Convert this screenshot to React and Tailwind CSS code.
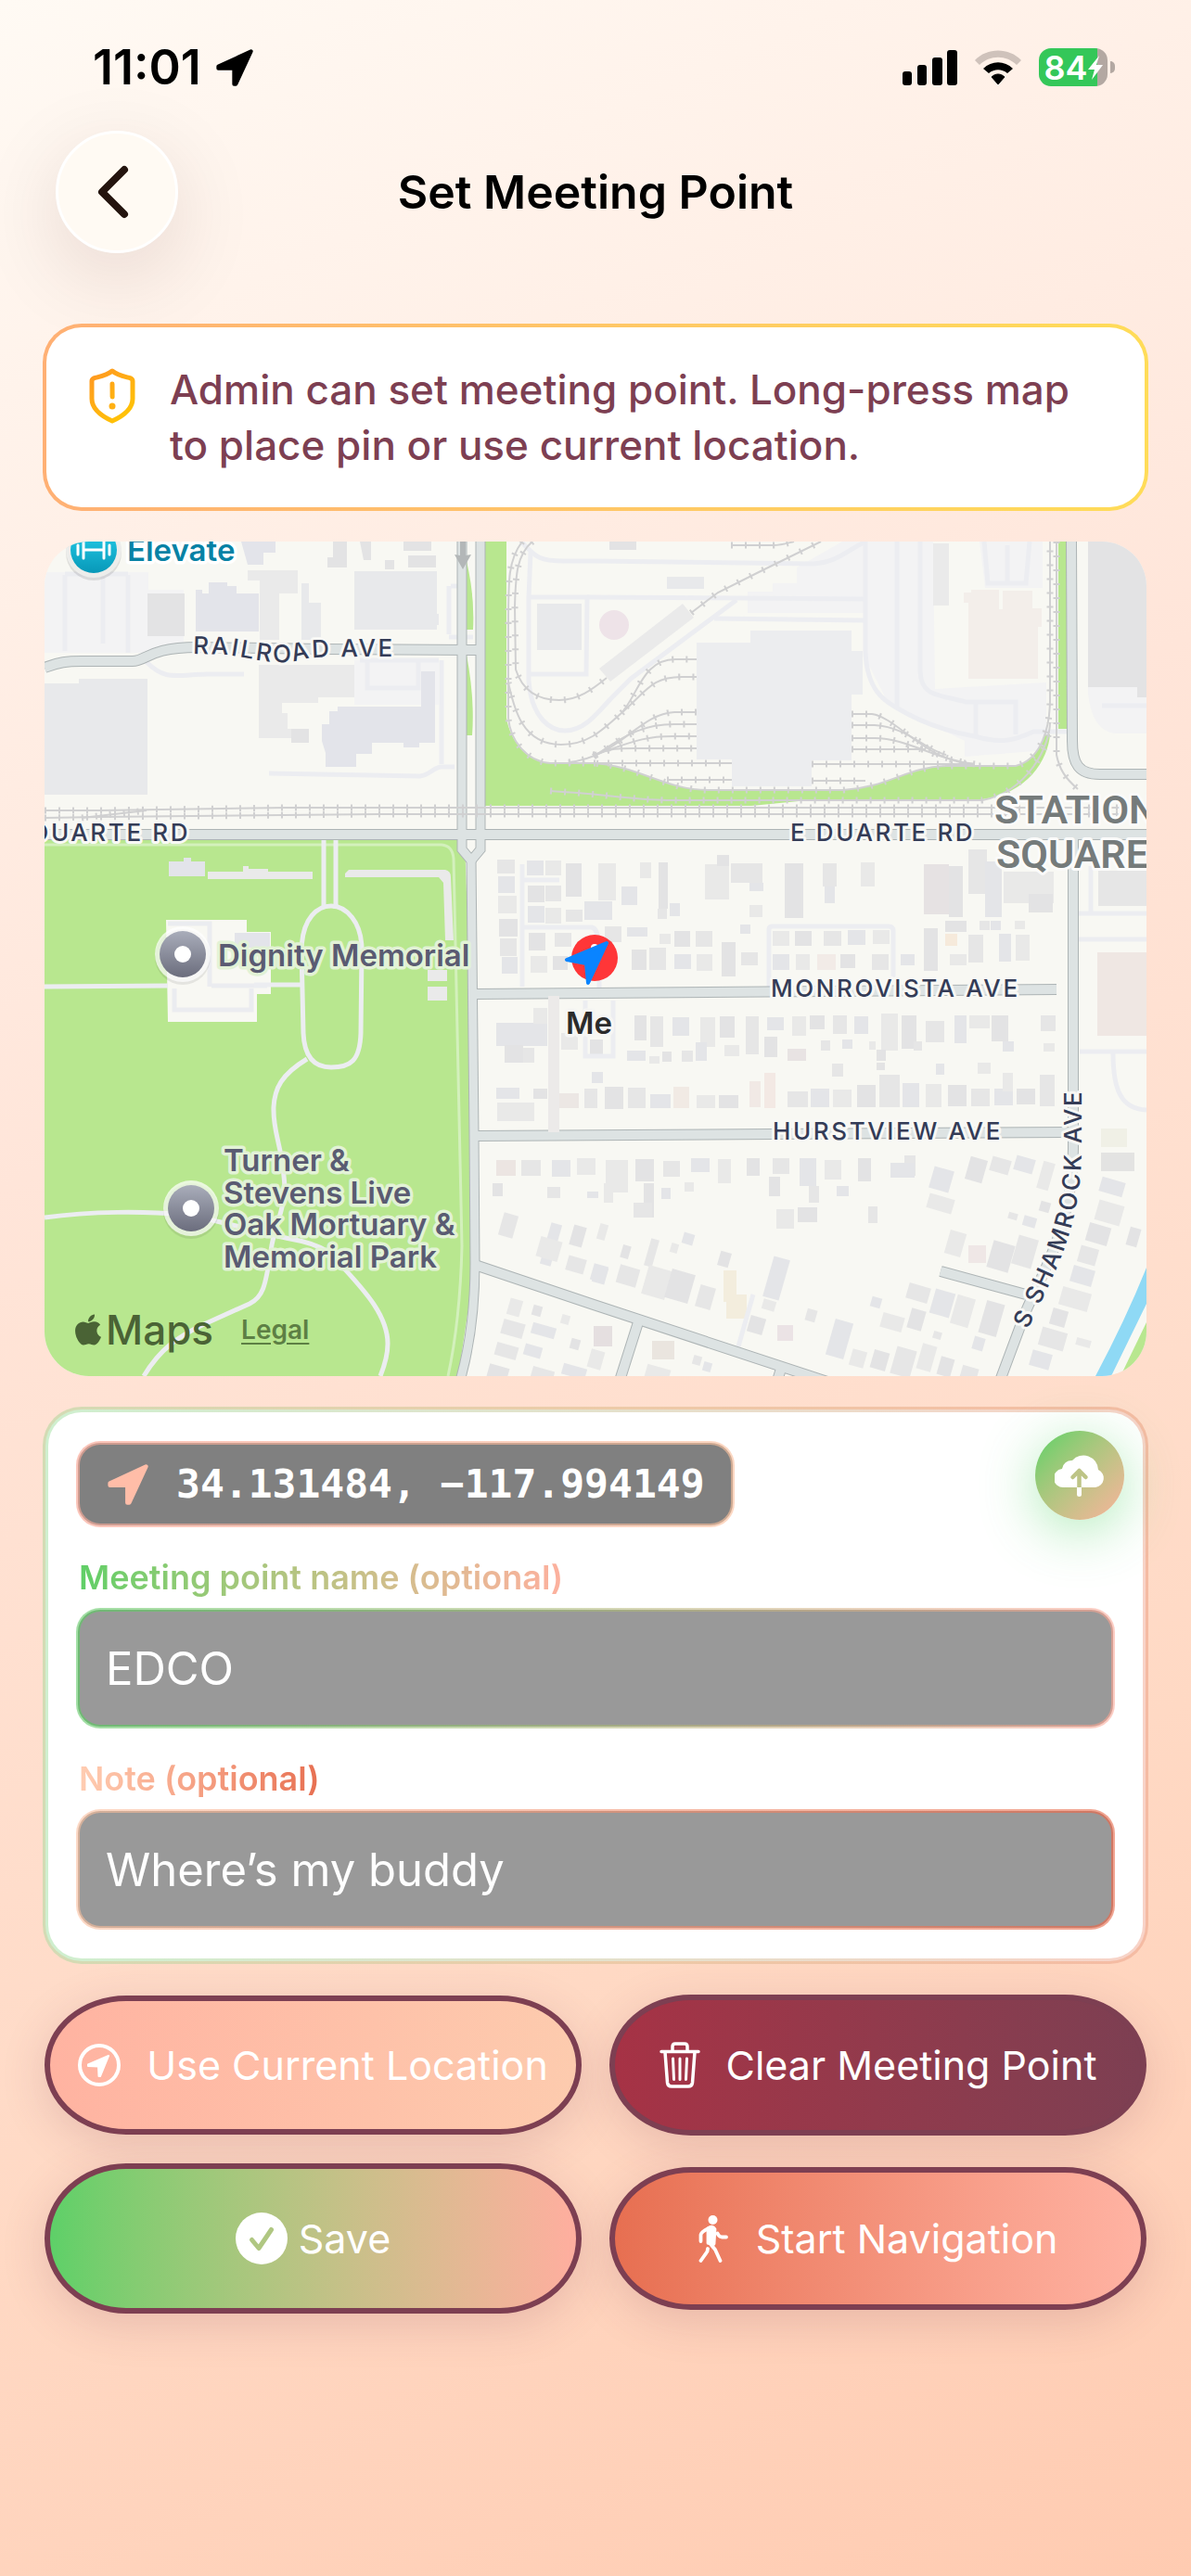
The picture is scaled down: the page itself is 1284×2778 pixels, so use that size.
import { useState } from "react";
import { FaApple } from "react-icons/fa";

// Building footprints: x, y, width, height
const houses = [
    [488, 343, 19, 15], [489, 361, 18, 18], [489, 382, 20, 19], [490, 407, 20, 19], [491, 428, 18, 19],
    [520, 344, 18, 16], [540, 344, 17, 16], [521, 371, 18, 18], [540, 371, 17, 17], [521, 393, 18, 18],
    [540, 395, 17, 17], [562, 347, 17, 36], [562, 397, 18, 13], [582, 388, 30, 20], [597, 347, 19, 40],
    [522, 422, 18, 19], [550, 422, 18, 15], [493, 448, 17, 18], [524, 447, 18, 18], [548, 447, 16, 15],
    [604, 415, 18, 17], [622, 372, 17, 20], [642, 346, 12, 17], [662, 346, 10, 50], [661, 396, 10, 11],
    [674, 390, 11, 14], [712, 348, 26, 38], [725, 338, 13, 12], [740, 347, 34, 21], [760, 368, 15, 9],
    [760, 392, 14, 13], [798, 347, 20, 59], [839, 347, 15, 25], [841, 372, 11, 18], [880, 346, 15, 26],
    [975, 350, 15, 55], [996, 332, 20, 48], [1014, 345, 18, 60], [1034, 356, 54, 34], [1061, 380, 26, 20],
    [1136, 355, 52, 38], [628, 416, 22, 10], [663, 423, 12, 11], [679, 420, 17, 17], [702, 420, 18, 17],
    [750, 413, 11, 10], [785, 420, 18, 16], [809, 420, 18, 16], [840, 420, 19, 16], [866, 419, 19, 16],
    [893, 419, 18, 15], [971, 409, 23, 12], [1008, 409, 11, 10], [1020, 409, 11, 10], [1046, 409, 11, 9],
    [948, 417, 15, 46], [996, 424, 16, 30], [1029, 423, 13, 30], [1047, 424, 15, 28], [633, 440, 16, 22],
    [652, 438, 18, 24], [679, 445, 18, 16], [703, 445, 17, 18], [730, 432, 15, 37], [751, 443, 18, 14],
    [785, 445, 18, 17], [810, 445, 15, 17], [858, 445, 16, 15], [892, 445, 18, 17], [923, 445, 15, 12],
    [976, 445, 18, 12],
    [636, 511, 13, 27], [653, 512, 14, 33], [677, 513, 18, 20], [707, 513, 16, 32], [728, 512, 16, 23],
    [756, 512, 14, 41], [779, 513, 18, 14], [806, 512, 15, 21], [825, 511, 16, 15], [850, 511, 15, 20],
    [873, 512, 15, 19], [902, 509, 18, 40], [924, 511, 16, 36], [950, 517, 20, 23], [981, 511, 13, 30],
    [997, 511, 22, 14], [1021, 511, 18, 28], [1074, 511, 16, 17], [628, 549, 20, 11], [652, 555, 11, 8],
    [666, 550, 10, 11], [687, 549, 12, 12], [702, 540, 12, 20], [733, 543, 16, 12], [776, 534, 14, 22],
    [837, 538, 10, 11], [860, 537, 11, 10], [889, 539, 7, 9], [897, 548, 10, 12], [937, 539, 9, 10],
    [1033, 539, 12, 11], [1077, 541, 12, 9], [897, 562, 9, 8], [849, 563, 12, 14], [961, 563, 9, 12],
    [1006, 562, 14, 12], [604, 588, 20, 24], [629, 589, 19, 22], [653, 596, 22, 15], [703, 597, 20, 14],
    [727, 597, 21, 14], [801, 593, 22, 17], [826, 590, 20, 20], [850, 591, 20, 19], [876, 586, 20, 24],
    [900, 575, 22, 35], [925, 584, 18, 26], [950, 585, 17, 25], [974, 586, 20, 23], [999, 590, 20, 19],
    [1024, 590, 20, 18], [1033, 573, 11, 20], [1048, 590, 20, 17], [1073, 575, 16, 34],
    [487, 519, 55, 25], [527, 503, 15, 17], [496, 543, 20, 19], [516, 546, 12, 16], [487, 589, 25, 12],
    [488, 605, 40, 20], [527, 590, 15, 11], [582, 590, 14, 21], [590, 572, 12, 12], [557, 530, 18, 18],
    [588, 537, 14, 18], [514, 667, 21, 17], [547, 667, 20, 18], [574, 665, 20, 18], [483, 692, 11, 14],
    [542, 696, 14, 12], [585, 701, 12, 7], [605, 667, 24, 35], [637, 666, 20, 24], [667, 668, 18, 17],
    [697, 665, 20, 15], [726, 666, 14, 26], [757, 665, 14, 19], [785, 665, 18, 17], [814, 665, 18, 30],
    [841, 667, 18, 21], [877, 665, 14, 25], [927, 662, 12, 22], [912, 670, 26, 16], [603, 692, 10, 21],
    [646, 692, 11, 37], [635, 713, 20, 16], [665, 697, 10, 12], [690, 691, 10, 10], [781, 685, 12, 21],
    [824, 695, 11, 18], [854, 695, 13, 11], [789, 720, 19, 21], [812, 718, 21, 16], [888, 717, 10, 18],
];

// Same as above, but tilted to follow the diagonal streets
const tiltedHouses = [
    [492, 725, 16, 25], [540, 735, 12, 46], [532, 752, 24, 22], [568, 738, 14, 22], [563, 772, 20, 16],
    [590, 780, 16, 18], [500, 817, 14, 18], [526, 824, 10, 11], [493, 841, 24, 16], [525, 845, 26, 12],
    [557, 834, 9, 10], [567, 860, 10, 11], [486, 866, 24, 14], [517, 867, 19, 12], [587, 872, 15, 20],
    [478, 889, 22, 14], [525, 892, 24, 12], [558, 889, 26, 12], [597, 736, 9, 17], [622, 759, 9, 14],
    [650, 752, 9, 30], [688, 746, 12, 12], [675, 757, 8, 10], [727, 766, 12, 16], [618, 782, 22, 20],
    [592, 782, 14, 18], [647, 783, 26, 32], [672, 787, 26, 32], [704, 803, 17, 24], [780, 772, 18, 45],
    [774, 818, 14, 11], [759, 836, 17, 18], [821, 828, 11, 13], [847, 840, 20, 40], [869, 872, 16, 18],
    [892, 873, 17, 20], [915, 870, 22, 30], [891, 815, 11, 11], [902, 834, 24, 16], [932, 828, 16, 22],
    [930, 802, 24, 17], [957, 808, 22, 27], [980, 814, 20, 32], [1011, 820, 20, 36], [958, 852, 9, 8],
    [1001, 858, 12, 14], [943, 866, 16, 28], [964, 880, 15, 20], [988, 890, 18, 14], [956, 676, 22, 24],
    [952, 706, 28, 16], [995, 665, 19, 25], [1020, 665, 21, 16], [1046, 664, 21, 16], [1073, 669, 13, 30],
    [1073, 712, 11, 11], [1039, 724, 10, 7], [1055, 728, 14, 11], [973, 744, 18, 26], [1019, 756, 24, 30],
    [1046, 750, 22, 32], [1138, 688, 26, 16], [1134, 713, 28, 22], [1124, 737, 24, 20], [1115, 761, 20, 18],
    [1107, 783, 24, 18], [1095, 807, 32, 20], [1085, 828, 17, 18], [1073, 850, 28, 20], [1063, 874, 22, 17],
    [1112, 860, 16, 8], [1168, 740, 12, 20], [699, 878, 9, 10], [710, 885, 9, 10], [648, 890, 26, 14],
];

const warmHouses = [
    [948, 348, 27, 54, "#e6e2e3"], [971, 423, 13, 13, "#f6eadb"], [833, 445, 20, 17, "#f2ebe7"],
    [801, 547, 20, 13, "#e8e3e3"], [678, 588, 17, 23, "#f1eae4"], [760, 582, 12, 28, "#f1e9e5"],
    [776, 573, 12, 38, "#f3e9e4"], [555, 595, 21, 16, "#ece7e4"], [487, 667, 21, 17, "#ece5e2"],
    [996, 759, 19, 19, "#efe7e6"], [732, 786, 14, 34, "#f3eddd"], [735, 812, 22, 26, "#f3eddd"],
    [790, 845, 17, 17, "#ebe3e5"], [655, 862, 24, 20, "#eae5df"], [592, 846, 20, 22, "#e5dfe0"],
    [1139, 633, 28, 20, "#f0f0e6"], [1139, 659, 36, 20, "#e3e3e2"], [1135, 443, 53, 90, "#efe7e3"],
];

const tones = ["#e6e6e6", "#e4e5e8", "#e9e9e8", "#e3e3e4"];

const yardTracks = [
    "M515 0C500 20 500 40 500 90V190C502 215 520 237 545 239H592C640 242 670 268 715 268H861C910 265 930 243 972 242H1047C1075 235 1084 200 1084 170V0",
    "M526 0C508 15 508 40 507 70L508 138C515 160 530 171 555 171C575 171 590 160 606 147",
    "M697 77L726 55L770 33L837 0",
    "M500 152C506 180 515 219 557 219C585 219 600 205 622 185C640 165 645 127 680 127H703",
    "M622 185C650 160 655 146 687 146H703",
    "M565 238C620 232 640 186 679 184H703",
    "M592 232C630 205 650 197 679 197H703",
    "M592 231C640 212 655 210 677 210H703",
    "M592 230C610 223 620 223 635 223H703",
    "M592 239H741",
    "M671 257H741",
    "M870 186H892C920 190 950 238 1003 240",
    "M870 198H895C930 200 950 225 972 230",
    "M870 212H895C930 212 960 235 1003 240",
    "M870 224H950",
    "M827 240H1003",
    "M827 258H885",
    "M545 269C600 272 630 278 671 279H1011C1060 270 1084 220 1084 195",
    "M1091 0V230C1094 245 1100 255 1114 267",
    "M740 4H785C795 4 800 2 808 0",
    "M0 290L60 290L260 287H1188",
    "M0 298L60 297L360 294H1188",
    "M40 298L110 290",
];

const drives = [
    "M514 0C530 18 535 21 560 21H592L829 24C855 22 865 10 885 0",
    "M524 12L522 60V150C525 190 545 204 561 204C580 204 592 190 610 170L632 148L746 63",
    "M522 60H585L584 143H522",
    "M585 60L885 62",
    "M722 83L885 85",
    "M885 0V120C887 160 905 172 920 180C950 198 980 206 1003 210C1030 218 1045 215 1066 205H1102",
    "M919 0V178",
    "M944 0V140C945 168 965 165 993 173H1047V208",
    "M1004 173V208",
    "M1013 0L1017 45H1058L1062 0M1038 4V44",
    "M110 130C130 150 140 144 175 143H215",
    "M242 250L405 253C415 252 420 243 428 243H442",
    "M428 128V240",
    "M340 128H425M348 130V158H403V130",
    "M22 36V118M63 36V110M90 36V120M22 35H90",
    "M438 48H445M436 48V100M436 103H462",
    "M515 348V480M515 365H555M517 416H590C598 418 598 430 598 482",
    "M781 482V418Q781 415 785 415H910Q915 415 915 420V470",
    "M583 495V555H613V495",
    "M1115 401H1188M1115 429H1188M1128 350V400",
    "M1116 550H1188M1152 552C1152 590 1160 612 1188 613",
    "M764 812L748 868",
    "M1140 177H1188",
];

const cemeteryPaths = [
    "M301 322V396M314 322V396",
    "M277 440C278 405 295 393 309 393C325 393 342 410 342 440L341 530C340 560 330 567 309 567C290 567 280 555 279 530Z",
    "M0 480L133 479M226 478H277",
    "M283 558C255 575 248 590 247 610C246 640 257 650 259 698C259 720 247 740 244 765C238 805 235 815 221 822L170 845C145 857 125 870 107 900",
    "M0 729C50 722 110 722 150 726C190 732 230 745 265 752C300 758 315 770 324 785C345 808 370 835 370 865Q370 880 362 900",
];

const streets = [
    { d: "M0 136C15 130 25 129 40 129H95C110 129 112 114 165 114L300 116L470 117", w: 10 },
    { d: "M445 316H0M445 316H1188", w: 10 },
    { d: "M1107 0L1108 215C1108 240 1115 251 1138 251H1188", w: 10 },
    { d: "M462 488L1091 483", w: 10 },
    { d: "M464 641L1104 637", w: 10 },
    { d: "M1109 316V655C1108 740 1075 790 1058 830L1030 905", w: 10 },
    { d: "M966 787L1058 812", w: 10 },
    { d: "M464 780L592 823L850 908", w: 10 },
    { d: "M640 842L620 905M794 892L790 905", w: 10 },
    { d: "M450 -5V332L460 344", w: 9 },
    { d: "M470 -5V332L460 344", w: 9 },
    { d: "M460 342L463 640L464 778C464 830 458 870 448 905", w: 9 },
];

function StreetLabel({ x, y, anchor = "start", children }) {
    return (
        <text x={x} y={y} textAnchor={anchor} className="text-[26px] font-medium tracking-widest fill-[#343c57] stroke-[#f8f8f5] stroke-[6px] [paint-order:stroke] [stroke-linejoin:round]">
            {children}
        </text>
    );
}

function PlaceMarker({ x, y }) {
    return (
        <g>
            <circle cx={x} cy={y + 3} r="30" fill="#000" opacity="0.08" />
            <circle cx={x} cy={y} r="30" fill="#fff" opacity="0.7" />
            <circle cx={x} cy={y} r="25" fill="url(#pin)" />
            <circle cx={x} cy={y} r="9" fill="#fff" />
        </g>
    );
}

function MapView() {
    return (
        <div className="relative mx-0.5 h-[900px] overflow-hidden rounded-[48px] bg-[#f8f8f3]">
            <svg viewBox="0 0 1188 900" preserveAspectRatio="xMidYMid slice" className="h-full w-full" role="img" aria-label="Map">
                <defs>
                    <linearGradient id="pin" x1="0" y1="0" x2="0" y2="1">
                        <stop offset="0" stopColor="#a9adba" />
                        <stop offset="1" stopColor="#6b6d7d" />
                    </linearGradient>
                    <linearGradient id="gym" x1="0" y1="0" x2="0" y2="1">
                        <stop offset="0" stopColor="#26d0ec" />
                        <stop offset="1" stopColor="#0898b8" />
                    </linearGradient>
                    <path id="railroad" d="M160 121L195 122C230 127 250 134 275 128C290 124 300 124 400 124" />
                    <path id="shamrock" d="M1060 850C1088 790 1118 740 1118 655V570" />
                </defs>

                {/* Paved lots */}
                <g fill="#f3f3f4">
                    <path d="M0 33H112V52H150V120H0Z" />
                    <path d="M811 28L860 0H958L960 159L1080 152V225L992 232V215L910 175L887 130V77H758V54H785V45H811Z" />
                    <path d="M1008 0H1076V50H1014Z" />
                    <path d="M334 128H425V176H334Z" />
                    <path d="M1125 157H1178V168H1188V207H1155Q1130 205 1125 165Z" />
                </g>

                {/* Parks and water */}
                <g fill="#b8e78f">
                    <path d="M0 321H453L464 640V780L446 900H0Z" />
                    <path d="M475 0H498V190C502 215 520 238 545 239H592C640 242 670 268 715 268H861C910 265 930 243 972 242H1047C1065 238 1072 225 1078 208H1084C1082 235 1060 272 1011 278L813 280L762 285H475Z" />
                    <path d="M1093 0H1102V202H1093ZM455 21Q464 60 462 95H455ZM455 122Q464 170 461 209H455Z" />
                    <path d="M1188 842V900H1160Z" />
                </g>
                <path d="M1188 783V822L1150 900H1133Q1165 840 1188 783Z" fill="#8fd9f5" />
                <path d="M0 327H428Q440 328 441 342L447 620L450 760Q448 840 435 900" fill="none" stroke="#d3f0bc" strokeWidth="3" />

                {/* Large buildings */}
                <g fill="#e8e9eb">
                    <path d="M0 153H37V148H111V273H0Z" />
                    <path d="M531 67H579V117H531ZM671 38H711V51H671ZM334 32H423V78H425V90H423V95H334Z" />
                    <path d="M277 45H285V66H298V106H277Z" />
                    <path d="M703 109H761V96H870V118H882V165H870V236H827V264H741V235H703Z" fill="#ecedef" />
                </g>
                <g fill="#e3e4ea">
                    <path d="M163 52H170V56H177V44H197V48H207V56H231V97H163Z" />
                    <path d="M406 140H421V217H404V222H387V217H353V229H336V243H303V228L299 215V197H307V183H316V178H406Z" />
                    <path d="M212 0H249V12H236V25H219ZM134 345H150V341H158V345H173V361H134Z" />
                </g>
                <g fill="#eaeaea">
                    <path d="M219 31H273V56H253V106H232V42H219Z" />
                    <path d="M231 133H334V168H295V174H256V185H262V202H266V212H231Z" />
                    <path d="M688 67L700 82L610 151L598 137ZM958 2H975V69H958Z" />
                    <path d="M176 356H214V350H220V353H241V356H289V364H176ZM324 358L328 354H432Q438 355 438 362L441 430H432L430 368L425 362H324ZM413 462H434V474H413ZM413 480H434V495H413Z" />
                </g>
                <path d="M111 56H151V102H111ZM266 202H285V217H266ZM311 0H326V28H305V17H311ZM387 0H417V10H387ZM392 15H422V28H392ZM367 20H377V30H367ZM340 0H352V20H344ZM1125 0H1188V168H1178V157H1125ZM609 0H638V9H609Z" fill="#e3e3e4" />
                <path d="M999 52H1029V73H1033V53H1065V72H1075V92H1071V148H996V66H991V55H999Z" fill="#f3eeea" />
                <circle cx="614" cy="90" r="16" fill="#eee3e8" />

                {/* Cemetery chapel */}
                <path d="M131 408H218V421H244V488H229V518H133Z" fill="#f8f8f3" />
                <path d="M133 412H178V480M140 482V505H223V482M180 479H240" fill="none" stroke="#ebecf0" strokeWidth="5" />
                <rect x="205" y="422" width="38" height="16" fill="#e3e4ea" />

                {houses.map(([x, y, w, h], i) => (
                    <rect key={i} x={x} y={y} width={w} height={h} fill={tones[i % 4]} />
                ))}
                {tiltedHouses.map(([x, y, w, h], i) => (
                    <rect key={i} x={x} y={y} width={w} height={h} fill={tones[i % 4]} transform={`rotate(16 ${x + w / 2} ${y + h / 2})`} />
                ))}
                {warmHouses.map(([x, y, w, h, fill], i) => (
                    <rect key={i} x={x} y={y} width={w} height={h} fill={fill} />
                ))}

                <g fill="none" stroke="#ecedf1" strokeWidth="5">
                    {drives.map((d) => <path key={d} d={d} />)}
                    {cemeteryPaths.map((d) => <path key={d} d={d} />)}
                </g>

                {/* Streets: all edges first so the junctions stay open */}
                <g fill="none" stroke="#adb4b5">
                    {streets.map(({ d, w }) => <path key={d} d={d} strokeWidth={w + 2} />)}
                </g>
                <g fill="none" stroke="#dde3e3">
                    {streets.map(({ d, w }) => <path key={d} d={d} strokeWidth={w} />)}
                </g>
                <path d="M543 490H555V637H543Z" fill="#eceae9" />
                <path d="M448 0H454V15L460 14L451 30L442 14L448 15Z" fill="#b3b7b8" />

                {/* Railway */}
                <g fill="none" stroke="#d0d0d1">
                    {yardTracks.map((d) => <path key={d} d={d} strokeWidth="2" />)}
                    {yardTracks.map((d) => <path key={`${d}-ties`} d={d} strokeWidth="7" strokeDasharray="2 13" />)}
                </g>

                {/* Labels */}
                <g className="font-['Inter',sans-serif]">
                    <text className="text-[26px] font-medium tracking-widest fill-[#343c57] stroke-[#f8f8f5] stroke-[6px] [paint-order:stroke] [stroke-linejoin:round]">
                        <textPath href="#railroad">RAILROAD AVE</textPath>
                    </text>
                    <StreetLabel x={157} y={323} anchor="end">E DUARTE RD</StreetLabel>
                    <StreetLabel x={804} y={323}>E DUARTE RD</StreetLabel>
                    <StreetLabel x={783} y={491}>MONROVISTA AVE</StreetLabel>
                    <StreetLabel x={785} y={645}>HURSTVIEW AVE</StreetLabel>
                    <text className="text-[26px] font-medium tracking-widest fill-[#343c57] stroke-[#f8f8f5] stroke-[6px] [paint-order:stroke] [stroke-linejoin:round]">
                        <textPath href="#shamrock">S SHAMROCK AVE</textPath>
                    </text>
                    <g className="font-['Roboto',sans-serif] text-[43px] font-semibold fill-[#757b7b] stroke-[#fbfbfa] stroke-[6px] [paint-order:stroke] [stroke-linejoin:round]">
                        <text x="1024" y="304">STATION</text>
                        <text x="1026" y="352">SQUARE</text>
                    </g>

                    <g className="text-[33px] font-semibold fill-[#5a5b72] stroke-[#e2f2d6] stroke-[7px] [paint-order:stroke] [stroke-linejoin:round]">
                        <text x="187" y="458">Dignity Memorial</text>
                        <text x="193" y="679">Turner &amp;</text>
                        <text x="193" y="714">Stevens Live</text>
                        <text x="193" y="748">Oak Mortuary &amp;</text>
                        <text x="193" y="783">Memorial Park</text>
                    </g>
                    <text x="89" y="21" className="text-[33px] font-semibold fill-[#0782a5] stroke-white stroke-[7px] [paint-order:stroke] [stroke-linejoin:round]">Elevate</text>
                    <text x="562" y="531" className="text-[33px] font-semibold fill-[#2b2b2b] stroke-[#f6f6f4] stroke-[7px] [paint-order:stroke] [stroke-linejoin:round]">Me</text>
                </g>

                <PlaceMarker x={149} y={445} />
                <PlaceMarker x={158} y={719} />
                <circle cx="53" cy="12" r="30" fill="#000" opacity="0.1" />
                <circle cx="53" cy="9" r="30" fill="#ededeb" />
                <circle cx="53" cy="9" r="25" fill="url(#gym)" />
                <path d="M36 4V14M42 0V18M64 0V18M70 4V14M42 9H64" fill="none" stroke="#fff" strokeWidth="3" strokeLinecap="round" />

                {/* My position */}
                <circle cx="593" cy="449" r="25" fill="#ff3638" />
                <circle cx="593" cy="438" r="4" fill="#fff" />
                <path d="M606 433L563 451L584 455L586 476Z" fill="#0a84ff" stroke="#0a84ff" strokeWidth="4" strokeLinejoin="round" />
            </svg>

            <div className="absolute bottom-5 left-7 flex items-center gap-[30px] font-medium text-[#4a6335]">
                <span className="flex items-center text-[44px] leading-[60px]">
                    <FaApple className="size-[38px]" />
                    Maps
                </span>
                <a href="#legal" className="text-[28px] font-semibold text-[#5d7f44] underline underline-offset-4">Legal</a>
            </div>
        </div>
    );
}

function ArrowIcon({ className }) {
    return (
        <svg viewBox="0 0 24 24" className={className} fill="currentColor" stroke="currentColor" strokeWidth="2.4" strokeLinejoin="round" aria-hidden="true">
            <path d="M22.6 1.4L1.4 11.2V12.4L11.6 12.5V22.6H12.8Z" />
        </svg>
    );
}

function StatusBar() {
    return (
        <div className="flex h-[141px] items-center justify-between pt-1 pr-[82px] pl-[100px]">
            <div className="flex items-center gap-4 text-[52px] leading-none font-semibold">
                <span>11:01</span>
                <ArrowIcon className="size-[40px]" />
            </div>
            <div className="flex items-center gap-[18px]">
                <svg viewBox="0 0 59 38" className="h-[38px] w-[59px]" aria-hidden="true">
                    <rect x="0" y="23" width="10" height="15" rx="3" />
                    <rect x="16" y="16" width="10" height="22" rx="3" />
                    <rect x="32" y="8" width="11" height="30" rx="3" />
                    <rect x="48" y="0" width="11" height="38" rx="3" />
                </svg>
                <svg viewBox="0 0 52 38" className="h-[38px] w-[52px]" aria-hidden="true">
                    <path d="M1 11C14 -3 38 -3 51 11L46 16C35 5 17 5 6 16Z" fill="#cfc2bb" />
                    <path d="M10 20C19 11 33 11 42 20L36 25C30 20 22 20 16 25Z" />
                    <path d="M19 29C23 25 29 25 33 29L26 37Z" stroke="#000" strokeLinejoin="round" />
                </svg>
                <div className="flex items-center gap-[3px]">
                    <div className="flex h-[41px] w-[74px] items-center justify-center rounded-[13px] bg-linear-to-r from-[#34c759] from-85% to-[#b3a8a2] to-85% text-white">
                        <span className="text-[36px] leading-none font-semibold">84</span>
                        <svg viewBox="0 0 16 26" className="h-[26px] w-4" fill="currentColor" aria-hidden="true">
                            <path d="M12 0L0 15H7L4 26L16 10H9Z" />
                        </svg>
                    </div>
                    <div className="h-[13px] w-[5px] rounded-r-full bg-[#b3a8a2]" />
                </div>
            </div>
        </div>
    );
}

function UploadIcon() {
    return (
        <svg viewBox="0 0 54 46" className="h-[46px] w-[54px]" aria-hidden="true">
            <path d="M10 36A10 10 0 0 1 8 16A10.500 10.500 0 0 1 19 7A16 16 0 0 1 47 17A10 10 0 0 1 44 36Z" fill="#fff" />
            <path d="M19.500 25L26.500 18L33.500 25M26.500 18V36" fill="none" stroke="#bdc486" strokeWidth="4.500" strokeLinecap="round" strokeLinejoin="round" />
            <path d="M24 36H29V43.500A2.500 2.500 0 0 1 24 43.500Z" fill="#fff" />
        </svg>
    );
}

const buttonStyle = "flex items-center justify-center rounded-[88px/50%] border-6 border-[#7d3f52] text-[43px] leading-none text-white shadow-[0_12px_48px_rgba(125,63,82,0.18)]";

export default function App() {
    const [name, setName] = useState("EDCO");
    const [note, setNote] = useState("Where’s my buddy");

    return (
        <div className="min-h-screen bg-[linear-gradient(155deg,#fffaf4_0%,#ffe5d9_38%,#ffd9c4_72%,#ffcbb1_100%)] pb-20 font-['Inter','Noto_Sans',sans-serif] text-black">
            <StatusBar />

            <header className="grid grid-cols-[132px_1fr_132px] items-center px-[60px]">
                <button type="button" aria-label="Back" className="flex size-[132px] items-center justify-center rounded-full border-3 border-white bg-[#fffaf3] shadow-[0_24px_90px_rgba(60,20,0,0.12)]">
                    <svg viewBox="0 0 34 58" className="mr-2 h-[58px] w-[34px]" fill="none" stroke="#24140e" strokeWidth="8" strokeLinecap="round" strokeLinejoin="round">
                        <path d="M29 5L5 29L29 53" />
                    </svg>
                </button>
                <h1 className="text-center text-[50px] font-semibold">Set Meeting Point</h1>
            </header>

            <main className="flex flex-col gap-[33px] px-[46px] pt-[76px]">
                <section className="flex items-start gap-[37px] rounded-[42px] border-4 border-transparent py-[37px] pr-8 pl-[46px] [background:linear-gradient(#fff,#fff)_padding-box,linear-gradient(90deg,#ffb074,#ffdc58)_border-box]">
                    <svg viewBox="0 0 50 60" className="mt-[7px] h-[60px] w-[50px] shrink-0" fill="none" stroke="url(#shield)" strokeWidth="5" strokeLinecap="round" strokeLinejoin="round" aria-hidden="true">
                        <defs>
                            <linearGradient id="shield" gradientUnits="userSpaceOnUse" x1="0" y1="0" x2="50" y2="60">
                                <stop offset="0" stopColor="#ff9424" />
                                <stop offset="1" stopColor="#ffcc00" />
                            </linearGradient>
                        </defs>
                        <path d="M25 3C19 8 12 9 5 11Q3 12 3 14V33C3 45 14 52 25 57C36 52 47 45 47 33V14Q47 12 45 11C38 9 31 8 25 3Z" />
                        <path d="M25 17L25.100 31" />
                        <circle cx="25" cy="41" r="3.500" fill="#ffb014" stroke="none" />
                    </svg>
                    <p className="text-[44px] leading-[60px] font-medium text-[#7d3f52]">
                        Admin can set meeting point. Long-press map to place pin or use current location.
                    </p>
                </section>

                <MapView />

                {/* Meeting point details */}
                <section className="rounded-[42px] bg-linear-to-r from-[#d3dbb4] via-[#eccba8] to-[#f5bba3] p-[3px]">
                    <div className="relative flex flex-col items-start rounded-[39px] border-3 border-transparent px-[30px] py-[31px] [background:linear-gradient(#fff,#fff)_padding-box,linear-gradient(90deg,#cfefcf,#f8d3c8)_border-box]">
                        <div className="rounded-[26px] bg-linear-to-r from-[#fbc5ba] to-[#fcd8c3] p-[2px]">
                            <div className="flex h-[89px] items-center gap-[30px] rounded-3xl border-2 border-transparent pr-[28px] pl-[30px] [background:linear-gradient(#808080,#808080)_padding-box,linear-gradient(90deg,#cd9b90,#cda992)_border-box]">
                                <ArrowIcon className="size-[44px] text-[#ffbda8]" />
                                <span className="font-['DejaVu_Sans_Mono','Liberation_Mono',monospace] text-[43px] leading-none font-bold text-white">34.131484, −117.994149</span>
                            </div>
                        </div>

                        <button type="button" aria-label="Upload" className="absolute top-5 right-5 flex size-[96px] items-center justify-center rounded-full bg-linear-135 from-[#6ccf6c] from-10% to-[#f9b29c] shadow-[0_12px_60px_rgba(80,210,100,0.45)]">
                            <UploadIcon />
                        </button>

                        <label htmlFor="point-name" className="mt-[32px] ml-[3px] bg-linear-to-r from-[#5fcf67] to-[#fdb09e] bg-clip-text text-[36px] leading-[44px] font-semibold text-transparent">
                            Meeting point name (optional)
                        </label>
                        <div className="mt-[11px] w-full rounded-[26px] bg-linear-to-r from-[#a2dfa5] to-[#fccdc4] p-[2px]">
                            <input id="point-name" value={name} onChange={(e) => setName(e.target.value)} className="block h-[126px] w-full rounded-3xl border-2 border-transparent px-[28px] text-[49px] text-white outline-none [background:linear-gradient(#999,#999)_padding-box,linear-gradient(90deg,#6fb974,#d59f94)_border-box]" />
                        </div>

                        <label htmlFor="point-note" className="mt-[32px] ml-[3px] bg-linear-to-r from-[#ffcdb2] to-[#e76f51] bg-clip-text text-[36px] leading-[44px] font-semibold text-transparent">
                            Note (optional)
                        </label>
                        <div className="mt-[11px] w-full rounded-[26px] bg-linear-to-r from-[#fcd9c6] to-[#f0a592] p-[2px]">
                            <input id="point-note" value={note} onChange={(e) => setNote(e.target.value)} className="block h-[126px] w-full rounded-3xl border-2 border-transparent px-[28px] text-[49px] text-white outline-none [background:linear-gradient(#999,#999)_padding-box,linear-gradient(90deg,#d3b09b,#cf7763)_border-box]" />
                        </div>
                    </div>
                </section>

                {/* Actions */}
                <div className="mx-0.5 grid grid-cols-2 items-center gap-[30px]">
                    <button type="button" className={`${buttonStyle} h-[150px] gap-[28px] bg-linear-to-r from-[#ffb3a1] to-[#fdcbae]`}>
                        <svg viewBox="0 0 46 46" className="size-[46px] shrink-0" aria-hidden="true">
                            <circle cx="23" cy="23" r="21" fill="none" stroke="currentColor" strokeWidth="4" />
                            <path d="M33 13L11 22.500V24L22 24.500L22.500 35H24Z" fill="currentColor" stroke="currentColor" strokeWidth="2" strokeLinejoin="round" />
                        </svg>
                        <span className="whitespace-nowrap">Use Current Location</span>
                    </button>
                    <button type="button" className={`${buttonStyle} h-[152px] gap-[28px] bg-linear-to-r from-[#a63245] to-[#7d3f52]`}>
                        <svg viewBox="0 0 44 50" className="h-[50px] w-11 shrink-0" fill="none" stroke="currentColor" strokeWidth="3.500" strokeLinecap="round" strokeLinejoin="round" aria-hidden="true">
                            <path d="M2 10.500H42M14 10V5Q14 2 17 2H27Q30 2 30 5V10M6 11L8.500 44Q9 48 13 48H31Q35 48 35.500 44L38 11" />
                            <path d="M14.500 18L15.500 40.500M22 18V40.500M29.500 18L28.500 40.500" strokeWidth="3" />
                        </svg>
                        <span className="whitespace-nowrap">Clear Meeting Point</span>
                    </button>
                    <button type="button" className={`${buttonStyle} h-[162px] gap-[12px] bg-linear-to-r from-[#5dd068] to-[#ffae9f]`}>
                        <svg viewBox="0 0 56 56" className="size-[56px] shrink-0" aria-hidden="true">
                            <circle cx="28" cy="28" r="28" fill="currentColor" />
                            <path d="M17.500 29.500L25 38.500L38.500 18.500" fill="none" stroke="#b0c782" strokeWidth="5" strokeLinecap="round" strokeLinejoin="round" />
                        </svg>
                        Save
                    </button>
                    <button type="button" className={`${buttonStyle} h-[154px] gap-[30px] bg-linear-to-r from-[#e76f51] to-[#ffb3a3]`}>
                        <svg viewBox="0 0 32 51" className="h-[51px] w-8 shrink-0" fill="none" stroke="currentColor" strokeWidth="3.800" strokeLinecap="round" strokeLinejoin="round" aria-hidden="true">
                            <circle cx="15.500" cy="5" r="5" fill="currentColor" stroke="none" />
                            <path d="M10.500 14Q15 11 17.500 15L16.500 31L10.500 30Z" fill="currentColor" />
                            <path d="M10 14.500Q3 18 2.500 21V28M20.500 19.500Q22 23 25 23.500H30M13 31L18 37L23.500 49M10 36L9.500 39L2.500 49" />
                        </svg>
                        <span className="whitespace-nowrap">Start Navigation</span>
                    </button>
                </div>
            </main>
        </div>
    );
}
